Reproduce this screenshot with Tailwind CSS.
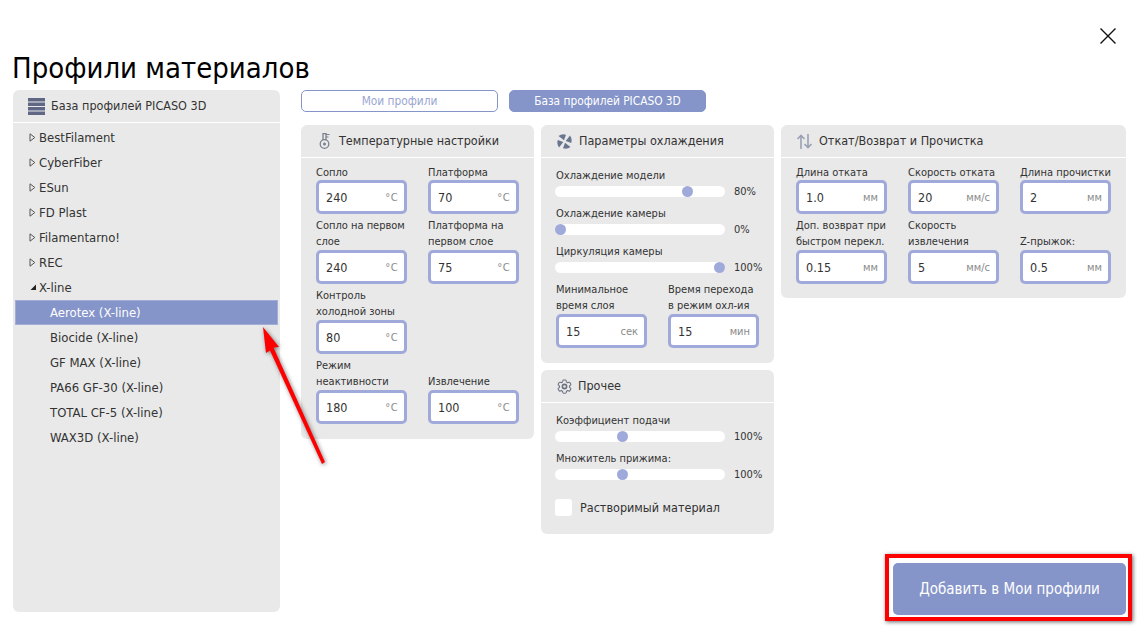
<!DOCTYPE html>
<html lang="ru">
<head>
    <meta charset="UTF-8">
    <title>Профили материалов</title>
    <script src="https://cdn.jsdelivr.net/npm/@tailwindcss/browser@4"></script>
</head>
<body class="bg-white">
<div class="relative w-[1137px] h-[628px] overflow-hidden bg-white text-[#333] font-['DejaVu_Sans',sans-serif] font-stretch-condensed text-[11px] leading-4">
    <button class="absolute left-[1100px] top-[28px]">
        <svg width="16" height="16" viewBox="0 0 16 16" stroke="#111" stroke-width="1.4"><path d="M0.5 0.5 15.5 15.5M15.5 0.5 0.5 15.5"/></svg>
    </button>

    <h1 class="pl-3 pt-[50px] h-[90px] text-[29px] leading-[36px] text-black">Профили материалов</h1>

    <div class="flex pl-[13px] gap-[21px]">
        <!-- left tree -->
        <div class="w-[267px] h-[522px] bg-[#e9e9e9] rounded-md">
            <div class="flex items-center h-[32px] pl-[15px] gap-[6px] border-b border-white box-content text-[12.5px]">
                <svg width="17" height="17" viewBox="0 0 17 17" fill="#5f6785"><path d="M0 0h17v3.500H0zM0 4.500h17V8H0zM0 9h17v3.500H0zM0 13.500h17V17H0z"/></svg>
                <span>База профилей PICASO 3D</span>
            </div>
            <ul class="pt-[2px] text-[13px]">
                <li class="flex items-center h-[25px] pl-[16px] gap-[3px]"><svg width="7" height="9" viewBox="0 0 7 9" fill="none" stroke="#555"><path d="M1 .8 5.800 4.500 1 8.200z"/></svg>BestFilament</li>
                <li class="flex items-center h-[25px] pl-[16px] gap-[3px]"><svg width="7" height="9" viewBox="0 0 7 9" fill="none" stroke="#555"><path d="M1 .8 5.800 4.500 1 8.200z"/></svg>CyberFiber</li>
                <li class="flex items-center h-[25px] pl-[16px] gap-[3px]"><svg width="7" height="9" viewBox="0 0 7 9" fill="none" stroke="#555"><path d="M1 .8 5.800 4.500 1 8.200z"/></svg>ESun</li>
                <li class="flex items-center h-[25px] pl-[16px] gap-[3px]"><svg width="7" height="9" viewBox="0 0 7 9" fill="none" stroke="#555"><path d="M1 .8 5.800 4.500 1 8.200z"/></svg>FD Plast</li>
                <li class="flex items-center h-[25px] pl-[16px] gap-[3px]"><svg width="7" height="9" viewBox="0 0 7 9" fill="none" stroke="#555"><path d="M1 .8 5.800 4.500 1 8.200z"/></svg>Filamentarno!</li>
                <li class="flex items-center h-[25px] pl-[16px] gap-[3px]"><svg width="7" height="9" viewBox="0 0 7 9" fill="none" stroke="#555"><path d="M1 .8 5.800 4.500 1 8.200z"/></svg>REC</li>
                <li class="flex items-center h-[25px] pl-[17px] gap-[2px]"><svg width="7" height="7" viewBox="0 0 7 7" fill="#222"><path d="M6 .5V6H.5z"/></svg>X-line</li>
                <li class="flex items-center h-[25px] ml-[2px] mr-[2px] pl-[34px] bg-[#8594c9] border border-[#a2aed8] text-white">Aerotex (X-line)</li>
                <li class="flex items-center h-[25px] pl-[37px]">Biocide (X-line)</li>
                <li class="flex items-center h-[25px] pl-[37px]">GF MAX (X-line)</li>
                <li class="flex items-center h-[25px] pl-[37px]">PA66 GF-30 (X-line)</li>
                <li class="flex items-center h-[25px] pl-[37px]">TOTAL CF-5 (X-line)</li>
                <li class="flex items-center h-[25px] pl-[37px]">WAX3D (X-line)</li>
            </ul>
        </div>

        <!-- right side -->
        <div class="w-[825px] h-[525px] flex flex-col">
            <div class="flex gap-[11px] h-[22px] text-center leading-[20px] text-[11.8px]">
                <div class="w-[197px] bg-white border border-[#8594c9] rounded-[5px] text-[#9aa5d3]">Мои профили</div>
                <div class="w-[197px] bg-[#8594c9] border border-[#8594c9] rounded-[5px] text-white">База профилей PICASO 3D</div>
            </div>

            <div class="flex gap-[7px] mt-[13px] items-start">
                <!-- temperature -->
                <section class="w-[233px] h-[314px] bg-[#e9e9e9] rounded-md">
                    <header class="flex items-center h-[32px] pl-[15px] gap-[7px] border-b border-white box-content text-[12.5px]">
                        <svg width="16" height="17" viewBox="0 0 16 17" fill="none" stroke="#7a8090" stroke-width="1.300"><path d="M7 7V.7h3V7"/><circle cx="8.500" cy="11" r="4.300"/><circle cx="8.500" cy="11" r="1.500" fill="#7a8090" stroke="none"/><path d="M10 1.500h3.500M10 4h2.500" stroke-width="1.100"/></svg>
                        <span>Температурные настройки</span>
                    </header>
                    <div class="grid grid-cols-[91px_91px] gap-x-[21px] gap-y-[4px] items-end pl-[15px] pt-[7px] whitespace-nowrap">
                        <div><div class="-mb-px">Сопло</div><div class="flex items-center justify-between h-[34px] pl-[7px] pr-[6px] pt-[2px] bg-white border-[3px] border-[#a0aada] rounded-[5px] text-[12.5px]">240<span class="text-[11px] tracking-[0.4px] text-[#8a8a8a]">°C</span></div></div>
                        <div><div class="-mb-px">Платформа</div><div class="flex items-center justify-between h-[34px] pl-[7px] pr-[6px] pt-[2px] bg-white border-[3px] border-[#a0aada] rounded-[5px] text-[12.5px]">70<span class="text-[11px] tracking-[0.4px] text-[#8a8a8a]">°C</span></div></div>
                        <div><div>Сопло на первом<br>слое</div><div class="flex items-center justify-between h-[34px] pl-[7px] pr-[6px] pt-[2px] bg-white border-[3px] border-[#a0aada] rounded-[5px] text-[12.5px]">240<span class="text-[11px] tracking-[0.4px] text-[#8a8a8a]">°C</span></div></div>
                        <div><div>Платформа на<br>первом слое</div><div class="flex items-center justify-between h-[34px] pl-[7px] pr-[6px] pt-[2px] bg-white border-[3px] border-[#a0aada] rounded-[5px] text-[12.5px]">75<span class="text-[11px] tracking-[0.4px] text-[#8a8a8a]">°C</span></div></div>
                        <div class="col-span-2 w-[91px]"><div>Контроль<br>холодной зоны</div><div class="flex items-center justify-between h-[34px] pl-[7px] pr-[6px] pt-[2px] bg-white border-[3px] border-[#a0aada] rounded-[5px] text-[12.5px]">80<span class="text-[11px] tracking-[0.4px] text-[#8a8a8a]">°C</span></div></div>
                        <div><div>Режим<br>неактивности</div><div class="flex items-center justify-between h-[34px] pl-[7px] pr-[6px] pt-[2px] bg-white border-[3px] border-[#a0aada] rounded-[5px] text-[12.5px]">180<span class="text-[11px] tracking-[0.4px] text-[#8a8a8a]">°C</span></div></div>
                        <div><div>Извлечение</div><div class="flex items-center justify-between h-[34px] pl-[7px] pr-[6px] pt-[2px] bg-white border-[3px] border-[#a0aada] rounded-[5px] text-[12.5px]">100<span class="text-[11px] tracking-[0.4px] text-[#8a8a8a]">°C</span></div></div>
                    </div>
                </section>

                <!-- cooling + other -->
                <div class="w-[233px] flex flex-col gap-[7px]">
                    <section class="h-[238px] bg-[#e9e9e9] rounded-md">
                        <header class="flex items-center h-[32px] pl-[16px] gap-[7px] border-b border-white box-content text-[12.5px]">
                            <svg width="15" height="15" viewBox="0 0 15 15" fill="#6a7590"><path d="M7 6.300 1.500 2Q5-.5 9 .8 8 3.500 7 6.300z"/><path transform="rotate(90 7.500 7.500)" d="M7 6.300 1.500 2Q5-.5 9 .8 8 3.500 7 6.300z"/><path transform="rotate(180 7.500 7.500)" d="M7 6.300 1.500 2Q5-.5 9 .8 8 3.500 7 6.300z"/><path transform="rotate(270 7.500 7.500)" d="M7 6.300 1.500 2Q5-.5 9 .8 8 3.500 7 6.300z"/></svg>
                            <span>Параметры охлаждения</span>
                        </header>
                        <div class="pl-[15px] pt-[10px] whitespace-nowrap">
                            <div>Охлаждение модели</div>
                            <div class="flex items-center gap-[9px] h-[11px] mt-[2px] -ml-px"><div class="relative w-[170px] h-[11px] bg-white rounded-full"><span class="absolute left-[127px] top-0 w-[11px] h-[11px] rounded-full bg-[#a0aada]"></span></div><span>80%</span></div>
                            <div class="mt-[9px]">Охлаждение камеры</div>
                            <div class="flex items-center gap-[9px] h-[11px] mt-[2px] -ml-px"><div class="relative w-[170px] h-[11px] bg-white rounded-full"><span class="absolute left-0 top-0 w-[11px] h-[11px] rounded-full bg-[#a0aada]"></span></div><span>0%</span></div>
                            <div class="mt-[9px]">Циркуляция камеры</div>
                            <div class="flex items-center gap-[9px] h-[11px] mt-[2px] -ml-px"><div class="relative w-[170px] h-[11px] bg-white rounded-full"><span class="absolute left-[159px] top-0 w-[11px] h-[11px] rounded-full bg-[#a0aada]"></span></div><span>100%</span></div>
                            <div class="grid grid-cols-[91px_91px] gap-x-[21px] items-end mt-[9px]">
                                <div><div>Минимальное<br>время слоя</div><div class="flex items-center justify-between h-[34px] pl-[7px] pr-[6px] pt-[2px] bg-white border-[3px] border-[#a0aada] rounded-[5px] text-[12.5px]">15<span class="text-[11px] text-[#8a8a8a]">сек</span></div></div>
                                <div><div>Время перехода<br>в режим охл-ия</div><div class="flex items-center justify-between h-[34px] pl-[7px] pr-[6px] pt-[2px] bg-white border-[3px] border-[#a0aada] rounded-[5px] text-[12.5px]">15<span class="text-[11px] text-[#8a8a8a]">мин</span></div></div>
                            </div>
                        </div>
                    </section>

                    <section class="h-[164px] bg-[#e9e9e9] rounded-md">
                        <header class="flex items-center h-[32px] pl-[15px] gap-[5px] border-b border-white box-content text-[12.5px]">
                            <svg width="17" height="17" viewBox="0 0 24 24" fill="none" stroke="#6b7080" stroke-width="1.5"><path d="M9.600 3.900c.1-.6.6-1 1.200-1h2.400c.6 0 1.100.4 1.200 1l.2 1.300c.1.400.4.700.7.900l.5.300c.3.200.8.200 1.100.1l1.200-.5c.6-.2 1.200 0 1.500.5l1.200 2.100c.3.500.2 1.100-.3 1.500l-1 .8c-.3.200-.5.600-.5 1v.6c0 .4.200.8.500 1l1 .8c.5.400.6 1 .3 1.500l-1.200 2.100c-.3.500-.9.700-1.500.5l-1.200-.5c-.4-.1-.8-.1-1.100.1l-.5.300c-.3.200-.6.500-.7.900l-.2 1.300c-.1.600-.6 1-1.200 1h-2.400c-.6 0-1.100-.4-1.200-1l-.2-1.300c-.1-.4-.4-.7-.7-.9l-.5-.3c-.3-.2-.8-.2-1.100-.1l-1.200.5c-.6.200-1.200 0-1.500-.5l-1.200-2.100c-.3-.5-.2-1.100.3-1.500l1-.8c.3-.2.500-.6.500-1v-.6c0-.4-.2-.8-.5-1l-1-.8c-.5-.4-.6-1-.3-1.500l1.200-2.100c.3-.5.900-.7 1.500-.5l1.200.5c.4.100.8.100 1.100-.1l.5-.3c.3-.2.600-.5.700-.9z"/><circle cx="12" cy="12" r="3" stroke-width="2.200"/></svg>
                            <span>Прочее</span>
                        </header>
                        <div class="pl-[15px] pt-[10px] whitespace-nowrap">
                            <div>Коэффициент подачи</div>
                            <div class="flex items-center gap-[9px] h-[11px] mt-[2px] -ml-px"><div class="relative w-[170px] h-[11px] bg-white rounded-full"><span class="absolute left-[62px] top-0 w-[11px] h-[11px] rounded-full bg-[#a0aada]"></span></div><span>100%</span></div>
                            <div class="mt-[9px]">Множитель прижима:</div>
                            <div class="flex items-center gap-[9px] h-[11px] mt-[2px] -ml-px"><div class="relative w-[170px] h-[11px] bg-white rounded-full"><span class="absolute left-[62px] top-0 w-[11px] h-[11px] rounded-full bg-[#a0aada]"></span></div><span>100%</span></div>
                            <div class="flex items-center gap-[8px] mt-[19px] -ml-px text-[12.5px]"><span class="w-[17px] h-[17px] bg-white rounded-[3px]"></span>Растворимый материал</div>
                        </div>
                    </section>
                </div>

                <!-- retract -->
                <section class="w-[345px] h-[173px] bg-[#e9e9e9] rounded-md">
                    <header class="flex items-center h-[32px] pl-[15px] gap-[6px] border-b border-white box-content text-[12.5px]">
                        <svg width="17" height="15" viewBox="0 0 17 15" fill="none" stroke="#99a1b3" stroke-width="1.600"><path d="M5 15V1.500M1.500 5 5 1.500 8.500 5M12 0V13.500M8.500 10 12 13.500 15.500 10"/></svg>
                        <span>Откат/Возврат и Прочистка</span>
                    </header>
                    <div class="grid grid-cols-[91px_91px_91px] gap-x-[21px] gap-y-[4px] items-end pl-[15px] pt-[7px] whitespace-nowrap">
                        <div><div class="-mb-px">Длина отката</div><div class="flex items-center justify-between h-[34px] pl-[7px] pr-[6px] pt-[2px] bg-white border-[3px] border-[#a0aada] rounded-[5px] text-[12.5px]">1.0<span class="text-[11px] text-[#8a8a8a]">мм</span></div></div>
                        <div><div class="-mb-px">Скорость отката</div><div class="flex items-center justify-between h-[34px] pl-[7px] pr-[6px] pt-[2px] bg-white border-[3px] border-[#a0aada] rounded-[5px] text-[12.5px]">20<span class="text-[11px] text-[#8a8a8a]">мм/с</span></div></div>
                        <div><div class="-mb-px">Длина прочистки</div><div class="flex items-center justify-between h-[34px] pl-[7px] pr-[6px] pt-[2px] bg-white border-[3px] border-[#a0aada] rounded-[5px] text-[12.5px]">2<span class="text-[11px] text-[#8a8a8a]">мм</span></div></div>
                        <div><div>Доп. возврат при<br>быстром перекл.</div><div class="flex items-center justify-between h-[34px] pl-[7px] pr-[6px] pt-[2px] bg-white border-[3px] border-[#a0aada] rounded-[5px] text-[12.5px]">0.15<span class="text-[11px] text-[#8a8a8a]">мм</span></div></div>
                        <div><div>Скорость<br>извлечения</div><div class="flex items-center justify-between h-[34px] pl-[7px] pr-[6px] pt-[2px] bg-white border-[3px] border-[#a0aada] rounded-[5px] text-[12.5px]">5<span class="text-[11px] text-[#8a8a8a]">мм/с</span></div></div>
                        <div><div>Z-прыжок:</div><div class="flex items-center justify-between h-[34px] pl-[7px] pr-[6px] pt-[2px] bg-white border-[3px] border-[#a0aada] rounded-[5px] text-[12.5px]">0.5<span class="text-[11px] text-[#8a8a8a]">мм</span></div></div>
                    </div>
                </section>
            </div>

            <div class="relative mt-auto ml-[592px] w-[233px] h-[52px]">
                <button class="w-full h-full bg-[#8594c9] rounded-[5px] text-white text-[15px] leading-[50px]">Добавить в Мои профили</button>
                <div class="absolute left-[-8px] top-[-9px] w-[247px] h-[67px] border-[4px] border-[#f00] shadow-[1px_1px_4px_rgba(0,0,0,0.6)] pointer-events-none"></div>
            </div>
        </div>
    </div>

    <!-- annotation arrow -->
    <svg class="absolute left-[255px] top-[320px]" width="85" height="155" viewBox="0 0 85 155" fill="#f00" style="filter:drop-shadow(1px 1px 2px rgba(0,0,0,.5))">
        <path d="M8 7 24 27 18.500 27.500 70 142 67 144 15 30.500 11 33z"/>
    </svg>
</div>
</body>
</html>
